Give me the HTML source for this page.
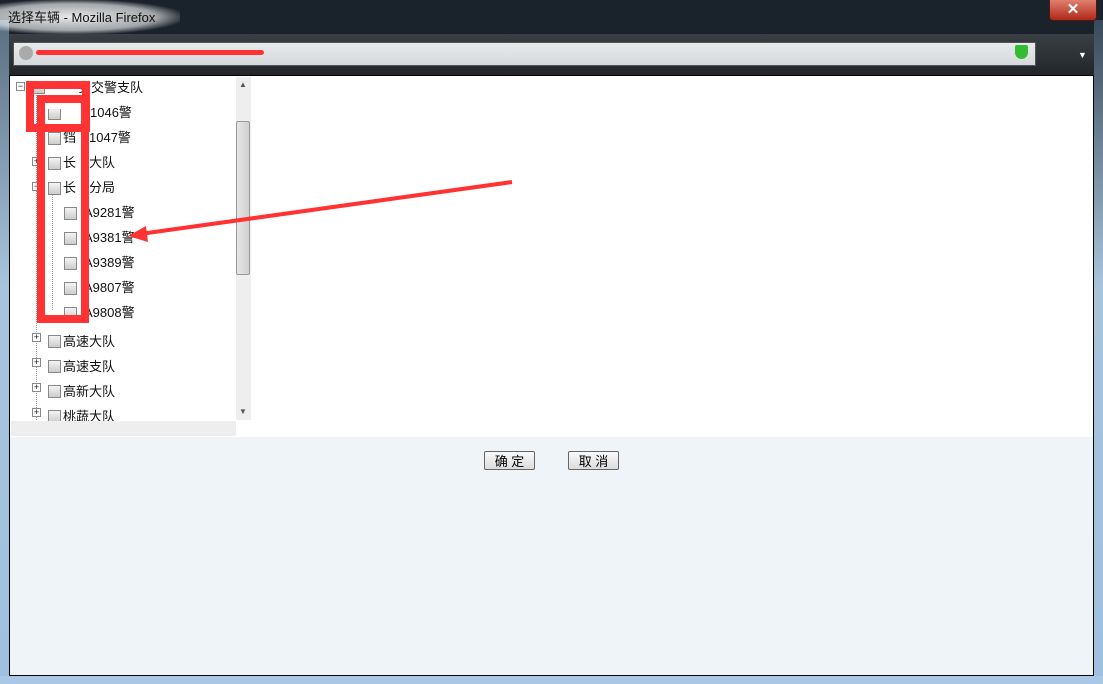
<!DOCTYPE html>
<html><head><meta charset="utf-8"><style>
body{margin:0;width:1103px;height:684px;overflow:hidden;position:relative;background:#1a232c;font-family:"Liberation Sans","Noto Sans CJK SC",sans-serif}
.abs{position:absolute}
.glow{left:0;top:0;width:180px;height:34px;background:radial-gradient(ellipse at 40% 50%,rgba(255,255,255,.9),rgba(255,255,255,.6) 55%,rgba(255,255,255,0) 75%)}
.title{left:8px;top:7px;font-size:13px;color:#111}
.frameL{left:0;top:20px;width:9px;height:664px;background:linear-gradient(#5a6e80,#a8c4dc 40%,#9fc0e0)}
.frameR{left:1094px;top:20px;width:9px;height:664px;background:linear-gradient(#3a4a5a,#a8c4dc 40%,#9fc0e0)}
.frameB{left:0;top:676px;width:1103px;height:8px;background:#a9c7e6}
.toolbar{left:9px;top:34px;width:1085px;height:41px;background:linear-gradient(#3a3f44,#222629)}
.url{left:13px;top:42px;width:1021px;height:22px;background:linear-gradient(#e8eaec,#d6d9dc);border:1px solid #555}
.close{left:1049px;top:0;width:46px;height:20px;background:linear-gradient(#e08070,#b02818);border:1px solid #4a1a10;border-top:none;border-radius:0 0 4px 4px;color:#fff;font-size:15px;text-align:center;line-height:19px;font-weight:bold}
.content{left:9px;top:75px;width:1085px;height:601px;background:#eff4f8;border:1px solid #000;box-sizing:border-box}
.white{left:10px;top:76px;width:1083px;height:361px;background:#fff}
.tree{left:10px;top:76px;width:242px;height:361px;background:#fff;font-size:13px;color:#111}
.vs{left:236px;top:77px;width:15px;height:343px;background:#eee}
.thumb{left:236px;top:121px;width:14px;height:154px;background:linear-gradient(90deg,#e6e6e6,#d0d0d0);border:1px solid #999;border-radius:2px;box-sizing:border-box}
.hs{left:11px;top:421px;width:225px;height:15px;background:#eee}
.row{position:absolute;white-space:nowrap;line-height:16px}
.cb{position:absolute;width:11px;height:11px;border:1px solid #888;background:linear-gradient(#f4f4f4,#ccc)}
.pm{position:absolute;width:7px;height:7px;border:1px solid #888;background:#fff;font-size:9px;line-height:7px;text-align:center}
.btn{top:451px;width:51px;height:19px;border:1px solid #666;border-radius:2px;background:linear-gradient(#fafafa,#dcdcdc);font-size:13px;text-align:center;line-height:19px;box-sizing:border-box}
.red{border:8px solid #f33;box-sizing:border-box}
.dot{position:absolute;border-left:1px dotted #999}
</style></head><body>
<div class="abs frameL"></div><div class="abs frameR"></div><div class="abs frameB"></div>
<div class="abs glow"></div>
<div class="abs title">选择车辆 - Mozilla Firefox</div>
<div class="abs close">✕</div>
<div class="abs toolbar"></div>
<div class="abs url"></div>
<div class="abs" style="left:19px;top:46px;width:14px;height:14px;border-radius:50%;background:#aaa"></div>
<div class="abs" style="left:36px;top:50px;width:228px;height:5px;border-radius:3px;background:#f33"></div>
<div class="abs" style="left:1015px;top:45px;width:13px;height:14px;background:#3b3;border-radius:2px 2px 7px 7px"></div>
<div class="abs" style="left:1078px;top:50px;color:#fff;font-size:9px">▼</div>
<div class="abs content"></div>
<div class="abs white"></div>
<div class="abs tree">
<div class="dot" style="left:26px;top:14px;height:330px"></div>
<div class="dot" style="left:42px;top:114px;height:120px"></div>
<div class="pm" style="left:6px;top:6px">−</div>
<div class="cb" style="left:22px;top:5px"></div><div class="row" style="left:68px;top:4px">安交警支队</div>
<div class="cb" style="left:38px;top:31px"></div><div class="row" style="left:80px;top:29px">1046警</div>
<div class="cb" style="left:38px;top:56px"></div><div class="row" style="left:53px;top:54px">铛　1047警</div>
<div class="pm" style="left:22px;top:81px">+</div>
<div class="cb" style="left:38px;top:81px"></div><div class="row" style="left:53px;top:79px">长　大队</div>
<div class="pm" style="left:22px;top:106px">−</div>
<div class="cb" style="left:38px;top:106px"></div><div class="row" style="left:53px;top:104px">长　分局</div>
<div class="cb" style="left:54px;top:131px"></div><div class="row" style="left:74px;top:129px">A9281警</div>
<div class="cb" style="left:54px;top:156px"></div><div class="row" style="left:74px;top:154px">A9381警</div>
<div class="cb" style="left:54px;top:181px"></div><div class="row" style="left:74px;top:179px">A9389警</div>
<div class="cb" style="left:54px;top:206px"></div><div class="row" style="left:74px;top:204px">A9807警</div>
<div class="cb" style="left:54px;top:231px"></div><div class="row" style="left:74px;top:229px">A9808警</div>
<div class="pm" style="left:22px;top:257px">+</div>
<div class="cb" style="left:38px;top:259px"></div><div class="row" style="left:53px;top:258px">高速大队</div>
<div class="pm" style="left:22px;top:282px">+</div>
<div class="cb" style="left:38px;top:284px"></div><div class="row" style="left:53px;top:283px">高速支队</div>
<div class="pm" style="left:22px;top:307px">+</div>
<div class="cb" style="left:38px;top:309px"></div><div class="row" style="left:53px;top:308px">高新大队</div>
<div class="pm" style="left:22px;top:332px">+</div>
<div class="cb" style="left:38px;top:334px"></div><div class="row" style="left:53px;top:333px">桃蔬大队</div>
</div>
<div class="abs vs"></div><div class="abs thumb"></div><div class="abs hs"></div>
<div class="abs" style="left:239px;top:80px;font-size:8px;color:#555">▲</div>
<div class="abs" style="left:239px;top:407px;font-size:8px;color:#555">▼</div>
<div class="abs red" style="left:26px;top:81px;width:64px;height:51px"></div>
<div class="abs red" style="left:37px;top:95px;width:52px;height:228px"></div>
<div class="abs" style="left:48px;top:105px;width:30px;height:4px;background:#fff"></div>
<div class="abs" style="left:48px;top:120px;width:24px;height:4px;background:#fff"></div>
<svg class="abs" style="left:0;top:0" width="1103" height="684"><path d="M512 182 L140 234" stroke="#f33" stroke-width="4"/><path d="M128 236 L146 226 L148 242 Z" fill="#f33"/></svg>
<div class="abs btn" style="left:484px">确 定</div>
<div class="abs btn" style="left:568px">取 消</div>
</body></html>
